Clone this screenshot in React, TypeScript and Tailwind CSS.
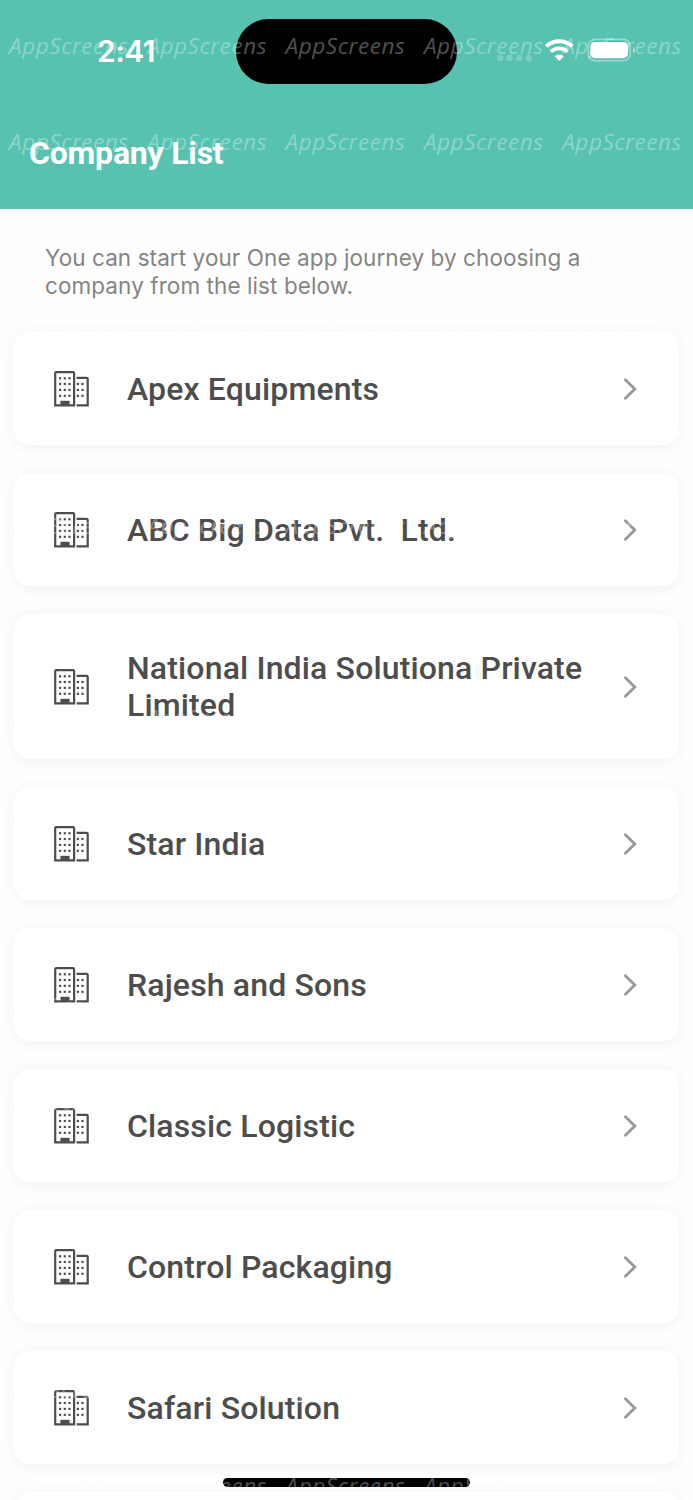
import { Fragment } from 'react';

const companies = [
  'Apex Equipments',
  'ABC Big Data Pvt.  Ltd.',
  'National India Solutiona Private Limited',
  'Star India',
  'Rajesh and Sons',
  'Classic Logistic',
  'Control Packaging',
  'Safari Solution',
  '',
];

const BuildingIcon = () => (
  <svg width="36" height="36" viewBox="0 0 36 36" fill="none" className="shrink-0 text-[#4d4d4d]">
    <path
      d="M1.2 34.4V2.3Q1.2 1.2 2.3 1.2H19Q20.1 1.2 20.1 2.3V34.4Z"
      stroke="currentColor"
      strokeWidth="2.2"
    />
    <path
      d="M22.6 6.9H32.6Q33.7 6.9 33.7 8V34.4H22.6"
      stroke="currentColor"
      strokeWidth="2.2"
    />
    <path d="M6.4 29.8H15.6V35H6.4Z" fill="currentColor" />
    {[7.3, 13, 18.9, 24.8].map((y) => (
      <Fragment key={y}>
        {[6.1, 10.8, 15.5].map((x) => (
          <rect key={x} x={x - 1.1} y={y - 1.1} width="2.2" height="2.2" fill="currentColor" />
        ))}
        {y > 8 &&
          [23.9, 28.5].map((x) => (
            <rect key={x} x={x - 1.1} y={y - 1.1} width="2.2" height="2.2" fill="currentColor" />
          ))}
      </Fragment>
    ))}
  </svg>
);

const ChevronIcon = () => (
  <svg width="14" height="24" viewBox="0 0 14 24" fill="none" className="ml-auto shrink-0">
    <path d="M2.4 2.8L11.8 12L2.4 21.2" stroke="#999999" strokeWidth="2.8" strokeLinecap="round" />
  </svg>
);

const StatusIcons = () => (
  <svg width="142" height="26" viewBox="0 0 142 26" fill="none">
    {[0, 9.4, 18.8, 28.2].map((x) => (
      <rect key={x} x={x + 0.3} y="17" width="6" height="6" rx="1.8" fill="#fff" fillOpacity="0.22" />
    ))}
    {/* wifi */}
    <path d="M49.2 8.4A19 19 0 0 1 75.2 8.4" stroke="#fff" strokeWidth="4" />
    <path d="M53.8 13.6A12.4 12.4 0 0 1 70.6 13.6" stroke="#fff" strokeWidth="3.8" />
    <path d="M57.5 18.2A7.2 7.2 0 0 1 66.9 18.2L62.2 23Z" fill="#fff" />
    {/* battery */}
    <rect x="91.2" y="1.4" width="42" height="21.4" rx="6.8" stroke="#fff" strokeOpacity="0.4" strokeWidth="1.6" />
    <rect x="93.4" y="4" width="37.6" height="16.2" rx="4.6" fill="#fff" />
    <path d="M136 8.8Q138.2 10.4 138.2 12.3Q138.2 14.2 136 15.8Z" fill="#fff" fillOpacity="0.5" />
  </svg>
);

const Watermark = () => (
  <div className="pointer-events-none absolute inset-0 z-20 overflow-hidden pl-[9px] pt-[22px]">
    {[...Array(16)].map((_, row) => (
      <div key={row} className="flex h-24 w-[720px]">
        {[...Array(5)].map((_, col) => (
          <span
            key={col}
            className="w-[138.3px] shrink-0 font-['Open_Sans'] text-[22.5px] leading-[48px] tracking-[0.55px] italic text-white/33"
          >
            AppScreens
          </span>
        ))}
      </div>
    ))}
  </div>
);

const CompanyCard = ({ name }: { name: string }) => (
  <li className="flex min-h-[113px] shrink-0 items-center rounded-2xl bg-white py-[35px] pl-10 pr-[42px] shadow-[0_2px_16px_rgba(0,0,0,0.06)]">
    {name && (
      <>
        <BuildingIcon />
        <span className="ml-[37px] w-[480px] whitespace-pre-wrap pt-px text-[32px] font-medium leading-[37px] tracking-[0.15px] text-[#4d4d4d]">
          {name}
        </span>
        <ChevronIcon />
      </>
    )}
  </li>
);

const App = () => (
  <div className="relative flex h-[1500px] w-[693px] flex-col overflow-hidden bg-[#fefefe] font-['Roboto',sans-serif]">
    <header className="h-[209px] shrink-0 bg-[#58c2b1]">
      <div className="flex h-[102px] items-center">
        <div className="w-[236px] pl-[97px] font-['Inter'] text-[30px] font-semibold leading-none tracking-[-0.5px] text-white">
          2:41
        </div>
        <div className="h-[65px] w-[221px] rounded-full bg-black" />
        <div className="ml-10">
          <StatusIcons />
        </div>
      </div>
      <h1 className="pl-[29px] pt-[33px] text-[32px] font-bold leading-[37px] tracking-[-0.2px] text-white">
        Company List
      </h1>
    </header>

    <p className="ml-[45px] mt-[35px] w-[560px] shrink-0 font-['Inter'] text-[22.5px] leading-7 tracking-[0.08px] text-[#858585]">
      You can start your One app journey by choosing a company from the list below.
    </p>

    <ul className="mx-3.5 mt-8 flex flex-col gap-7">
      {companies.map((name) => (
        <CompanyCard key={name} name={name} />
      ))}
    </ul>

    {/* home indicator */}
    <div className="absolute left-[223px] top-[1478px] z-10 h-[9px] w-[247px] rounded-full bg-black" />

    <Watermark />
  </div>
);

export default App;
